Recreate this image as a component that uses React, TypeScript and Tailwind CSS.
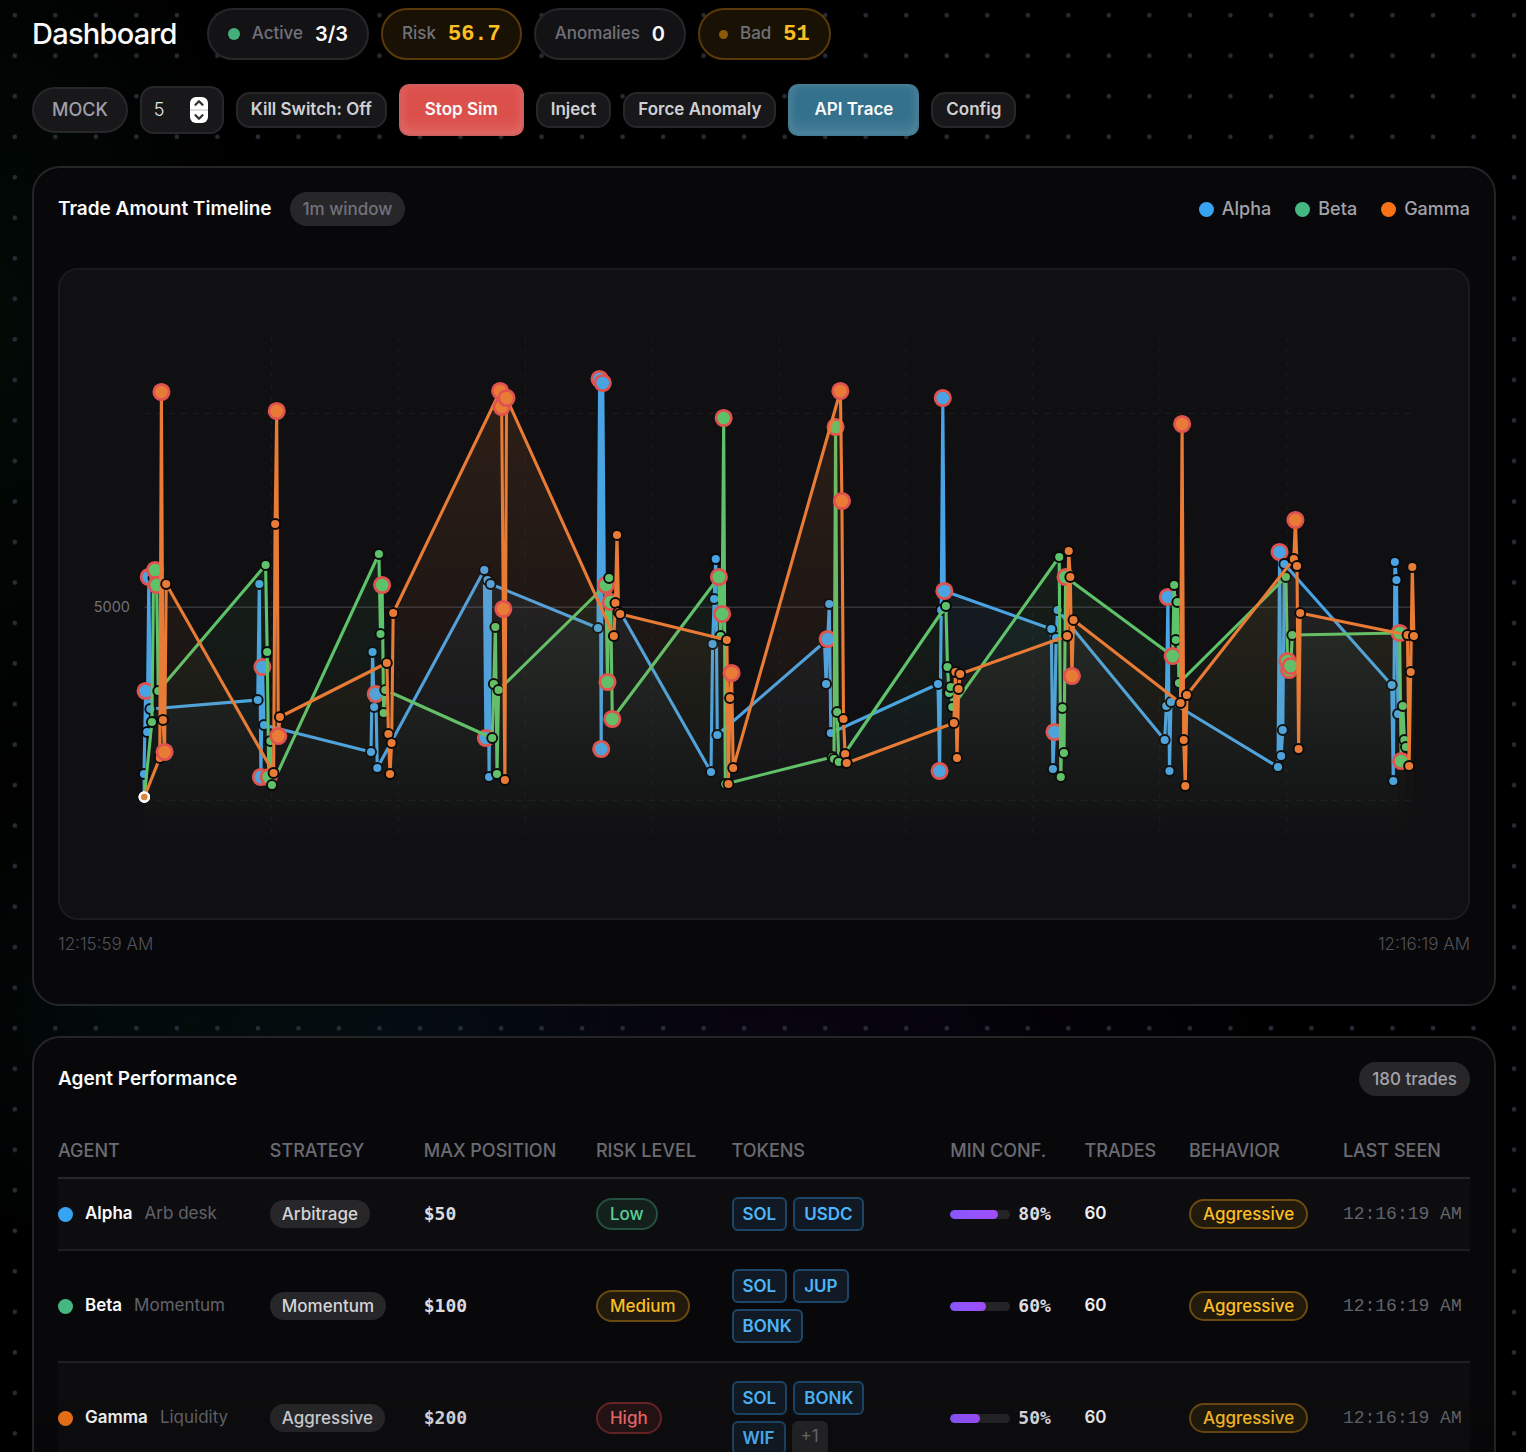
import { useState } from "react";
import clsx from "clsx";
import { ChevronDown, ChevronUp } from "lucide-react";

type SeriesKey = "alpha" | "beta" | "gamma";

interface ISeries {
    key: SeriesKey;
    name: string;
    color: string;
    dot: string;
}

interface IAgent {
    name: string;
    desk: string;
    dot: string;
    strategy: string;
    maxPosition: string;
    risk: "Low" | "Medium" | "High";
    tokens: string[];
    extra: number;
    confidence: number;
    trades: number;
    behavior: string;
    lastSeen: string;
}

const SERIES: ISeries[] = [
    { key: "alpha", name: "Alpha", color: "#4aa3e3", dot: "bg-[#38a3f1]" },
    { key: "beta", name: "Beta", color: "#5ec26a", dot: "bg-[#45b881]" },
    { key: "gamma", name: "Gamma", color: "#e87b35", dot: "bg-[#f97316]" },
];

const AGENTS: IAgent[] = [
    {
        name: "Alpha", desk: "Arb desk", dot: "bg-[#38a3f1]", strategy: "Arbitrage", maxPosition: "$50", risk: "Low",
        tokens: ["SOL", "USDC"], extra: 0, confidence: 80, trades: 60, behavior: "Aggressive", lastSeen: "12:16:19 AM",
    },
    {
        name: "Beta", desk: "Momentum", dot: "bg-[#45b881]", strategy: "Momentum", maxPosition: "$100", risk: "Medium",
        tokens: ["SOL", "JUP", "BONK"], extra: 0, confidence: 60, trades: 60, behavior: "Aggressive", lastSeen: "12:16:19 AM",
    },
    {
        name: "Gamma", desk: "Liquidity", dot: "bg-[#f07318]", strategy: "Aggressive", maxPosition: "$200", risk: "High",
        tokens: ["SOL", "BONK", "WIF"], extra: 1, confidence: 50, trades: 60, behavior: "Aggressive", lastSeen: "12:16:19 AM",
    },
];

const RISK_STYLES = {
    Low: "border-[#23513f] bg-[#13201c] text-[#5ad19a]",
    Medium: "border-[#6b4a10] bg-[#211a0d] text-[#fbbf24]",
    High: "border-[#6a2426] bg-[#241315] text-[#ef6a6a]",
};

// One row per tick, five trades per agent. Negative values are flagged as bad trades.
const TICKS: { x: number; alpha: number[]; beta: number[]; gamma: number[] }[] = [
    { x: 144, alpha: [774, -691, 732, -577, 709], beta: [722, 578, -570, -585, 691], gamma: [758, -392, 720, -752, 584] },
    { x: 257.7, alpha: [700, 584, -777, -667, 725], beta: [565, 652, -777, 741, 785], gamma: [773, 524, -411, -736, 717] },
    { x: 371, alpha: [752, 652, 707, -694, 768], beta: [554, 634, -585, 713, 690], gamma: [663, 734, 774, 743, 613] },
    { x: 484.3, alpha: [570, -738, 580, 777, 584], beta: [738, 684, 627, 774, 690], gamma: [-391, -407, -609, 780, -398] },
    { x: 598, alpha: [628, -379, -749, -383, 584], beta: [-585, -682, 578, -602, -719], gamma: [636, 603, 535, 612, 614] },
    { x: 711, alpha: [772, 644, 599, 559, 735], beta: [-577, 636, -614, -418, 784], gamma: [640, 784, 698, -673, 768] },
    { x: 824.5, alpha: [642, 684, -639, 604, 733], beta: [757, 759, -427, 712, 762], gamma: [-391, -501, 719, 754, 763] },
    { x: 938, alpha: [684, -771, 610, -398, -591], beta: [606, 667, 693, 687, 707], gamma: [723, 672, 758, 689, 674] },
    { x: 1051.3, alpha: [629, 769, -732, 638, 610], beta: [557, 777, 708, 753, -577], gamma: [636, 551, 577, -676, 620] },
    { x: 1164.7, alpha: [740, 706, -597, 771, 702], beta: [-656, 585, 640, 602, 683], gamma: [703, -424, 740, 786, 695] },
    { x: 1278, alpha: [767, -552, 756, 730, 564], beta: [577, -661, -670, -666, 635], gamma: [559, -520, 566, 749, 613] },
    { x: 1391.7, alpha: [685, 781, 562, 580, 714], beta: [-633, -761, 706, 740, 747], gamma: [635, 766, 672, 567, 636] },
];

const STEP = 1.585;
const ORIGIN = { x: 144.3, y: 797 };
const BASELINE = 840;

const getPoints = (key: SeriesKey, offset: number) =>
    TICKS.flatMap((tick) =>
        tick[key].map((value, i) => ({
            x: tick.x + (offset * 5 + i) * STEP,
            y: Math.abs(value),
            bad: value < 0,
        }))
    );

const TimelineChart = () => {
    const columns = Array.from({ length: 9 }, (_, i) => 271.5 + i * 126.9);

    return (
        <svg viewBox="60 270 1408 648" className="block w-full" role="img" aria-label="Trade amount timeline">
            <defs>
                {SERIES.map((s) => (
                    <linearGradient key={s.key} id={`fill-${s.key}`} gradientUnits="userSpaceOnUse" x1="0" y1="378" x2="0" y2={BASELINE}>
                        <stop offset="0" stopColor={s.color} stopOpacity="0.14" />
                        <stop offset="1" stopColor={s.color} stopOpacity="0" />
                    </linearGradient>
                ))}
            </defs>
            <g stroke="#1b1b1e" strokeWidth="1.3" strokeDasharray="6 6">
                <path d="M144.5 413.3H1412M144.5 800.3H1412" />
                {columns.map((x) => (
                    <path key={x} d={`M${x} 337V838`} strokeDasharray="4 8" />
                ))}
            </g>
            <path d="M144.5 607.3H1412" stroke="#343438" strokeWidth="1.5" />
            <text x="130" y="612" textAnchor="end" fontSize="14.5" fill="#71717a" className="font-['Inter',sans-serif]">5000</text>
            {SERIES.map((s, index) => {
                const points = getPoints(s.key, index);
                const line = `M${ORIGIN.x} ${ORIGIN.y}` + points.map((p) => `L${p.x.toFixed(1)} ${p.y}`).join("");
                return (
                    <g key={s.key}>
                        <path d={`${line}V${BASELINE}H${ORIGIN.x}Z`} fill={`url(#fill-${s.key})`} />
                        <path d={line} fill="none" stroke={s.color} strokeWidth="3.1" strokeLinejoin="round" />
                        {points.map((p, i) => (
                            <circle
                                key={i}
                                cx={p.x}
                                cy={p.y}
                                r={p.bad ? 7.7 : 5}
                                fill={s.color}
                                stroke={p.bad ? "#e0524f" : "#09090b"}
                                strokeWidth={p.bad ? 2.7 : 1.9}
                            />
                        ))}
                        <circle cx={ORIGIN.x} cy={ORIGIN.y} r="4.5" fill="#d9873f" stroke="#fff" strokeWidth="2.4" />
                    </g>
                );
            })}
        </svg>
    );
};

const StatPill = ({ label, value, dot, warn, mono }: { label: string; value: string; dot?: string; warn?: boolean; mono?: boolean }) => (
    <div
        className={clsx(
            "flex h-[52px] items-center gap-3 rounded-full border-2 px-[19px]",
            warn ? "border-[#59390a] bg-[#191103]" : "border-[#27272a] bg-[#131316]"
        )}
    >
        {dot && <span className={clsx("rounded-full", dot)} />}
        <span className="text-[17px] font-medium text-[#71717a]">{label}</span>
        <span
            className={clsx(
                "font-semibold",
                mono ? "font-['Liberation_Mono',monospace] text-[22px]" : "text-xl",
                warn ? "text-[#fbbf24]" : "text-[#fafafa]"
            )}
        >
            {value}
        </span>
    </div>
);

const GhostButton = ({ children }: { children: React.ReactNode }) => (
    <button
        type="button"
        className="h-9 rounded-[14px] border-2 border-[#27272a] bg-[#18181b] px-[13px] text-[17px] font-semibold whitespace-nowrap text-[#d0d0d4]"
    >
        {children}
    </button>
);

const Background = () => (
    <div className="pointer-events-none absolute inset-0 -z-10 bg-[radial-gradient(ellipse_260px_500px_at_0px_330px,#020a06,transparent),radial-gradient(ellipse_340px_260px_at_180px_1010px,#030c0b,transparent),radial-gradient(ellipse_360px_260px_at_380px_1040px,#050d16,transparent),radial-gradient(ellipse_520px_300px_at_780px_1060px,#090512,transparent)]">
        <svg className="h-full w-full" aria-hidden="true">
            <defs>
                <pattern id="dots" width="40.52" height="40.52" patternUnits="userSpaceOnUse">
                    <circle cx="14.8" cy="15.2" r="2.3" fill="#272c38" />
                </pattern>
            </defs>
            <rect width="100%" height="100%" fill="url(#dots)" />
        </svg>
    </div>
);

const AgentRow = ({ agent }: { agent: IAgent }) => (
    <tr className="border-b-2 border-[#1f1f22] odd:bg-[#0d0d0f]">
        <td>
            <div className="flex items-center gap-3">
                <span className={clsx("size-[15px] rounded-full", agent.dot)} />
                <span className="font-semibold text-[#fafafa]">{agent.name}</span>
                <span className="text-[#63636b]">{agent.desk}</span>
            </div>
        </td>
        <td>
            <span className="inline-block rounded-full bg-[#27272a] px-3 leading-7 font-medium text-[#d4d4d8]">{agent.strategy}</span>
        </td>
        <td className="font-['DejaVu_Sans_Mono',monospace] text-lg font-bold text-[#dcdce0]">{agent.maxPosition}</td>
        <td>
            <span className={clsx("inline-block rounded-full border-2 px-3 leading-7 font-medium", RISK_STYLES[agent.risk])}>{agent.risk}</span>
        </td>
        <td>
            <div className="flex max-w-[150px] flex-wrap gap-1.5 py-[18px]">
                {agent.tokens.map((token) => (
                    <span key={token} className="rounded-md border-2 border-[#1d4566] bg-[#111a24] px-[9px] leading-[30px] font-semibold text-[#4db5fa]">
                        {token}
                    </span>
                ))}
                {agent.extra > 0 && <span className="rounded-md bg-[#242427] px-[9px] leading-[30px] text-[#6b6b73]">+{agent.extra}</span>}
            </div>
        </td>
        <td>
            <div className="flex items-center gap-2">
                <div className="h-[9px] w-[60px] overflow-hidden rounded-full bg-[#242427]">
                    <div className="h-full rounded-full bg-linear-to-r from-[#8757ff] to-[#a04dfb]" style={{ width: `${agent.confidence}%` }} />
                </div>
                <span className="font-['DejaVu_Sans_Mono',monospace] text-lg font-bold text-[#dcdce0]">{agent.confidence}%</span>
            </div>
        </td>
        <td className="font-semibold text-[#f0f0f2]">{agent.trades}</td>
        <td>
            <span className="inline-block rounded-full border-2 border-[#6b4a10] bg-[#211a0d] px-3 leading-[26px] font-medium text-[#fbbf24]">
                {agent.behavior}
            </span>
        </td>
        <td className="font-['Liberation_Mono',monospace] text-lg whitespace-nowrap text-[#63636b]">{agent.lastSeen}</td>
    </tr>
);

const App: React.FC = () => {
    const [interval, setTickInterval] = useState(5);

    const step = (delta: number) => setTickInterval((value) => Math.max(1, value + delta));

    return (
        <div className="relative isolate h-screen overflow-hidden bg-black pt-2 pr-[30px] pl-8 font-['Inter',sans-serif] text-[#fafafa]">
            <Background />
            <header>
                <div className="flex flex-wrap items-center gap-3">
                    <h1 className="mr-[18px] text-[29px] font-medium tracking-tight">Dashboard</h1>
                    <StatPill label="Active" value="3/3" dot="size-3 bg-[#45ae7d]" />
                    <StatPill label="Risk" value="56.7" warn mono />
                    <StatPill label="Anomalies" value="0" />
                    <StatPill label="Bad" value="51" dot="size-[9px] bg-[#8a5a0b]" warn mono />
                </div>
                <div className="mt-6 flex flex-wrap items-center gap-3">
                    <span className="rounded-full border-2 border-[#27272a] bg-[#18181b] px-[18px] text-lg leading-[42px] font-medium text-[#9f9fa9]">MOCK</span>
                    <div className="flex h-12 w-[84px] items-center justify-between rounded-[14px] border-2 border-[#27272a] bg-[#18181b] pr-3.5 pl-3">
                        <input
                            type="text"
                            inputMode="numeric"
                            aria-label="Interval in seconds"
                            value={interval}
                            onChange={(e) => setTickInterval(Number(e.target.value) || 1)}
                            className="w-8 bg-transparent text-lg font-light text-[#e4e4e7] outline-none"
                        />
                        <span className="flex h-[26px] w-[18px] flex-col overflow-hidden rounded-[6px] bg-white text-[#333]">
                            <button type="button" aria-label="Increase" onClick={() => step(1)} className="flex h-[13px] items-center justify-center border-b border-[#ddd]">
                                <ChevronUp size={14} strokeWidth={4} />
                            </button>
                            <button type="button" aria-label="Decrease" onClick={() => step(-1)} className="flex h-[13px] items-center justify-center border-t border-[#ddd]">
                                <ChevronDown size={14} strokeWidth={4} />
                            </button>
                        </span>
                    </div>
                    <GhostButton>Kill Switch: Off</GhostButton>
                    <button type="button" className="h-[52px] rounded-[10px] border-2 border-[#cf5f5c] bg-[#dc504c] px-6 text-[17px] font-semibold shadow-[inset_0_-8px_12px_#ffffff18,inset_0_0_8px_#ffffff18]">
                        Stop Sim
                    </button>
                    <GhostButton>Inject</GhostButton>
                    <GhostButton>Force Anomaly</GhostButton>
                    <button type="button" className="h-[52px] rounded-[10px] border-2 border-[#457c94] bg-[#34718d] px-6 text-[17px] font-semibold shadow-[inset_0_-8px_12px_#ffffff18,inset_0_0_8px_#ffffff18]">
                        API Trace
                    </button>
                    <GhostButton>Config</GhostButton>
                </div>
            </header>

            <main className="mt-[30px] flex flex-col gap-[30px]">
                <section className="rounded-[28px] border-2 border-[#252528] bg-[#08080a] px-6 pt-6 pb-12">
                    <div className="flex h-[34px] items-center">
                        <h2 className="text-[19px] font-semibold">Trade Amount Timeline</h2>
                        <span className="ml-[18px] rounded-full bg-[#27272a] px-[13px] text-[17px] leading-[34px] font-medium text-[#71717a]">1m window</span>
                        <div className="ml-auto flex gap-6 text-lg font-medium text-[#a3a3ab]">
                            {SERIES.map((s) => (
                                <span key={s.key} className="flex items-center gap-2">
                                    <span className={clsx("size-[15px] rounded-full", s.dot)} />
                                    {s.name}
                                </span>
                            ))}
                        </div>
                    </div>
                    <div className="mt-[42px] overflow-hidden rounded-[20px] border-2 border-[#1b1b1e] bg-[#101012]">
                        <TimelineChart />
                    </div>
                    <div className="mt-3 flex justify-between text-[17px] leading-6 font-light text-[#52525b]">
                        <span>12:15:59 AM</span>
                        <span>12:16:19 AM</span>
                    </div>
                </section>

                <section className="rounded-[28px] border-2 border-[#252528] bg-[#08080a] px-6 py-6">
                    <div className="flex items-center justify-between">
                        <h2 className="text-[19px] font-semibold">Agent Performance</h2>
                        <span className="rounded-full bg-[#27272a] px-[13px] text-[17px] leading-[34px] font-medium text-[#a3a3ab]">180 trades</span>
                    </div>
                    <table className="mt-[29px] w-full table-fixed border-collapse text-left text-[17px]">
                        <colgroup>
                            <col className="w-[15%]" />
                            <col className="w-[10.9%]" />
                            <col className="w-[12.2%]" />
                            <col className="w-[9.6%]" />
                            <col className="w-[15.5%]" />
                            <col className="w-[9.5%]" />
                            <col className="w-[7.4%]" />
                            <col className="w-[10.9%]" />
                            <col className="w-[9%]" />
                        </colgroup>
                        <thead>
                            <tr className="h-[53px] border-b-2 border-[#27272a] text-lg whitespace-nowrap text-[#6b6b73] uppercase [&>th]:font-medium">
                                <th>Agent</th>
                                <th>Strategy</th>
                                <th>Max Position</th>
                                <th>Risk Level</th>
                                <th>Tokens</th>
                                <th>Min Conf.</th>
                                <th>Trades</th>
                                <th>Behavior</th>
                                <th>Last Seen</th>
                            </tr>
                        </thead>
                        <tbody>
                            {AGENTS.map((agent) => (
                                <AgentRow key={agent.name} agent={agent} />
                            ))}
                        </tbody>
                    </table>
                </section>
            </main>
            <div className="pointer-events-none absolute inset-x-0 bottom-0 h-20 bg-linear-to-t from-black/10 to-transparent" />
        </div>
    );
};

export default App;
